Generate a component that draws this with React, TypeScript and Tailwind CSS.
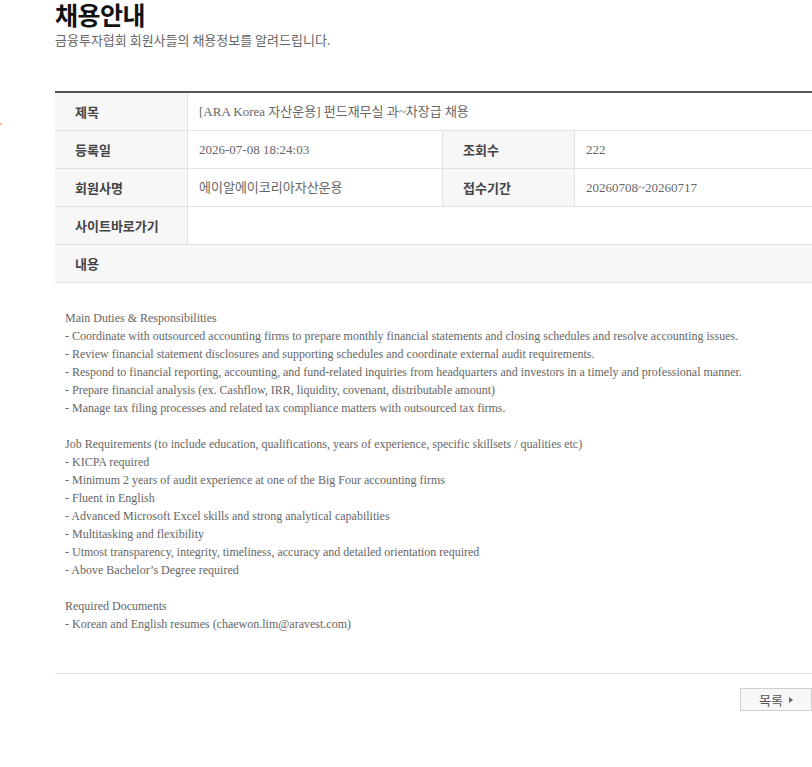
import React from "react";

const serif = { fontFamily: '"Liberation Serif", "Noto Sans CJK KR", serif' } as const;

const lines: string[] = [
  "Main Duties & Responsibilities",
  "- Coordinate with outsourced accounting firms to prepare monthly financial statements and closing schedules and resolve accounting issues.",
  "- Review financial statement disclosures and supporting schedules and coordinate external audit requirements.",
  "- Respond to financial reporting, accounting, and fund-related inquiries from headquarters and investors in a timely and professional manner.",
  "- Prepare financial analysis (ex. Cashflow, IRR, liquidity, covenant, distributable amount)",
  "- Manage tax filing processes and related tax compliance matters with outsourced tax firms.",
  "",
  "Job Requirements (to include education, qualifications, years of experience, specific skillsets / qualities etc)",
  "- KICPA required",
  "- Minimum 2 years of audit experience at one of the Big Four accounting firms",
  "- Fluent in English",
  "- Advanced Microsoft Excel skills and strong analytical capabilities",
  "- Multitasking and flexibility",
  "- Utmost transparency, integrity, timeliness, accuracy and detailed orientation required",
  "- Above Bachelor\u2019s Degree required",
  "",
  "Required Documents",
  "- Korean and English resumes (chaewon.lim@aravest.com)",
];

function Label({ children, border = false }: { children: React.ReactNode; border?: boolean }) {
  return (
    <div
      className={`flex items-center h-[37px] pl-[20px] bg-[#f7f7f7] text-[13px] font-bold text-[#444] ${
        border ? "border-l border-[#e2e2e2]" : ""
      } border-r border-[#e2e2e2]`}
    >
      {children}
    </div>
  );
}

function Value({ children, span = false }: { children?: React.ReactNode; span?: boolean }) {
  return (
    <div
      className={`flex items-center h-[37px] pl-[11px] text-[13px] text-[#666] ${span ? "col-span-3" : ""}`}
      style={serif}
    >
      {children}
    </div>
  );
}

const rowCls = "grid grid-cols-[133px_254px_133px_1fr] border-b border-[#e2e2e2]";

export default function App() {
  return (
    <div
      className="relative w-[812px] h-[767px] overflow-hidden bg-white"
      style={{ fontFamily: '"Noto Sans CJK KR", "Noto Sans", sans-serif' }}
    >
      <span className="absolute left-0 top-[123px] w-[2px] h-[2px] rounded-full bg-[#f59a6b]" />
      <div className="pl-[55px]">
        <h1 className="text-[25px] leading-[28px] font-bold text-[#111] tracking-[-0.5px]">채용안내</h1>
        <p className="mt-[3px] text-[13px] leading-[18px] text-[#666]">
          금융투자협회 회원사들의 채용정보를 알려드립니다.
        </p>

        <div className="mt-[42px] border-t-2 border-[#555]">
          <div className={rowCls}>
            <Label>제목</Label>
            <Value span>[ARA Korea 자산운용] 펀드재무실 과~차장급 채용</Value>
          </div>
          <div className={rowCls}>
            <Label>등록일</Label>
            <Value>2026-07-08 18:24:03</Value>
            <Label border>조회수</Label>
            <Value>222</Value>
          </div>
          <div className={rowCls}>
            <Label>회원사명</Label>
            <Value>에이알에이코리아자산운용</Value>
            <Label border>접수기간</Label>
            <Value>20260708~20260717</Value>
          </div>
          <div className={rowCls}>
            <Label>사이트바로가기</Label>
            <Value span />
          </div>
          <div className="flex items-center h-[38px] pl-[20px] bg-[#f7f7f7] border-b border-[#e2e2e2] text-[13px] font-bold text-[#444]">
            내용
          </div>
          <div
            className="pl-[10px] pt-[26px] pb-[40px] text-[12px] leading-[18px] text-[#666] border-b border-[#e2e2e2]"
            style={serif}
          >
            {lines.map((l, i) => (
              <div key={i} className="h-[18px] whitespace-nowrap">
                {l}
              </div>
            ))}
          </div>
        </div>

        <div className="flex justify-end mt-[14px]">
          <button className="flex items-center justify-center gap-[6px] w-[72px] h-[23px] border border-[#d0d0d0] bg-[#f7f7f7] text-[13px] text-[#555]">
            <span>목록</span>
            <svg width="4" height="6" viewBox="0 0 4 6">
              <path d="M0 0 L4 3 L0 6 Z" fill="#666" />
            </svg>
          </button>
        </div>
      </div>
    </div>
  );
}
